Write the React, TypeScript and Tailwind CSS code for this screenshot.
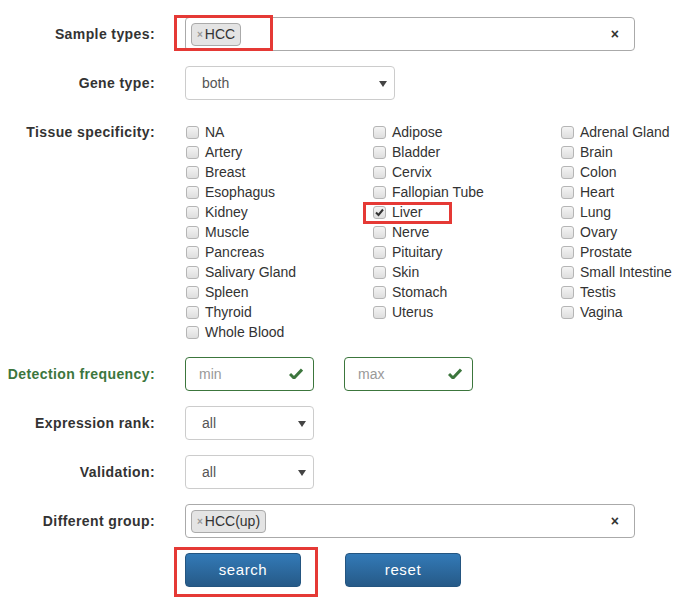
import React from "react"

const font = { fontFamily: '"Liberation Sans", Arial, sans-serif' }

const tissues = [
  ["NA", "Adipose", "Adrenal Gland"],
  ["Artery", "Bladder", "Brain"],
  ["Breast", "Cervix", "Colon"],
  ["Esophagus", "Fallopian Tube", "Heart"],
  ["Kidney", "Liver", "Lung"],
  ["Muscle", "Nerve", "Ovary"],
  ["Pancreas", "Pituitary", "Prostate"],
  ["Salivary Gland", "Skin", "Small Intestine"],
  ["Spleen", "Stomach", "Testis"],
  ["Thyroid", "Uterus", "Vagina"],
  ["Whole Blood", "", ""],
]

function Label({ children, green }: { children: React.ReactNode; green?: boolean }) {
  return (
    <div
      className={
        "w-[155px] shrink-0 text-right text-[14px] font-bold leading-[20px] pt-[7px] tracking-[0.4px] whitespace-nowrap " +
        (green ? "text-[#3c763d]" : "text-[#333]")
      }
    >
      {children}
    </div>
  )
}

function Caret() {
  return (
    <svg width="8" height="6" viewBox="0 0 8 6" className="absolute right-[7px] top-[14px]">
      <path d="M0 0 L8 0 L4 6 Z" fill="#444" />
    </svg>
  )
}

function Select({ value, width }: { value: string; width: string }) {
  return (
    <div
      className={
        "relative h-[34px] rounded-[4px] border border-[#ccc] bg-white text-[14px] text-[#555] leading-[32px] pl-[16px] " +
        width
      }
    >
      {value}
      <Caret />
    </div>
  )
}

function Tag({ text }: { text: string }) {
  return (
    <div className="absolute left-[5px] top-[5px] h-[23px] flex items-center rounded-[4px] border border-[#aaa] bg-[#e4e4e4] pl-[5px] pr-[5px] text-[14px] text-[#333]">
      <span className="text-[#999] font-bold text-[10px] mr-[2px]">×</span>
      {text}
    </div>
  )
}

function MultiSelect({ text }: { text: string }) {
  return (
    <div className="relative h-[34px] w-[450px] rounded-[4px] border border-[#aaa] bg-white">
      <Tag text={text} />
      <span className="absolute right-[15px] top-[7px] text-[14px] font-bold text-[#333] leading-[18px]">×</span>
    </div>
  )
}

function Check() {
  return (
    <svg width="14" height="11" viewBox="0 0 14 11" className="absolute right-[10px] top-[10px]">
      <path d="M1 6 L5 10 L13 1.5" fill="none" stroke="#3c763d" strokeWidth="3" />
    </svg>
  )
}

function Box({ checked }: { checked?: boolean }) {
  return (
    <span className="relative inline-block w-[13px] h-[13px] rounded-[3px] border border-[#b5b5b5] bg-gradient-to-b from-[#f4f4f4] to-[#dedede]">
      {checked && (
        <svg width="11" height="11" viewBox="0 0 11 11" className="absolute left-0 top-0">
          <path d="M2 5.5 L4.5 8 L9 2.5" fill="none" stroke="#333" strokeWidth="2" />
        </svg>
      )}
    </span>
  )
}

export default function App() {
  return (
    <div className="relative w-[690px] h-[597px] bg-white overflow-hidden" style={font}>
      <div className="pt-[17px] flex flex-col gap-[15px]">
        <div className="flex">
          <Label>Sample types:</Label>
          <div className="ml-[30px]">
            <MultiSelect text="HCC" />
          </div>
        </div>

        <div className="flex">
          <Label>Gene type:</Label>
          <div className="ml-[30px]">
            <Select value="both" width="w-[210px]" />
          </div>
        </div>

        <div className="flex">
          <Label>Tissue specificity:</Label>
          <div className="ml-[30px] pt-[7px] grid grid-cols-[187px_188px_130px]">
            {tissues.flat().map((t, i) =>
              t ? (
                <div key={i} className="h-[20px] flex items-center text-[14px] text-[#333]">
                  <span className="ml-[1px] mr-[6px] flex items-center">
                    <Box checked={t === "Liver"} />
                  </span>
                  <span className="whitespace-nowrap">{t}</span>
                </div>
              ) : (
                <div key={i} />
              )
            )}
          </div>
        </div>

        <div className="flex">
          <Label green>Detection frequency:</Label>
          <div className="ml-[30px] flex gap-[30px]">
            {["min", "max"].map((p) => (
              <div
                key={p}
                className="relative w-[129px] h-[34px] rounded-[4px] border border-[#3c763d] bg-white text-[14px] text-[#999] leading-[32px] pl-[13px]"
              >
                {p}
                <Check />
              </div>
            ))}
          </div>
        </div>

        <div className="flex">
          <Label>Expression rank:</Label>
          <div className="ml-[30px]">
            <Select value="all" width="w-[129px]" />
          </div>
        </div>

        <div className="flex">
          <Label>Validation:</Label>
          <div className="ml-[30px]">
            <Select value="all" width="w-[129px]" />
          </div>
        </div>

        <div className="flex">
          <Label>Different group:</Label>
          <div className="ml-[30px]">
            <MultiSelect text="HCC(up)" />
          </div>
        </div>

        <div className="flex">
          <div className="w-[155px] shrink-0" />
          <div className="ml-[30px] flex gap-[44px]">
            {["search", "reset"].map((b) => (
              <button
                key={b}
                className="w-[116px] h-[34px] rounded-[4px] border border-[#245580] bg-gradient-to-b from-[#337ab7] to-[#265a88] text-white text-[15px] leading-[32px] tracking-[0.6px]"
              >
                {b}
              </button>
            ))}
          </div>
        </div>
      </div>

      {/* red annotation boxes */}
      <div className="absolute left-[174px] top-[15px] w-[99px] h-[36px] border-[3px] border-[#e53935]" />
      <div className="absolute left-[363px] top-[202px] w-[89px] h-[22px] border-[3px] border-[#e53935]" />
      <div className="absolute left-[174px] top-[547px] w-[144px] h-[50px] border-[3px] border-[#e53935]" />
    </div>
  )
}
